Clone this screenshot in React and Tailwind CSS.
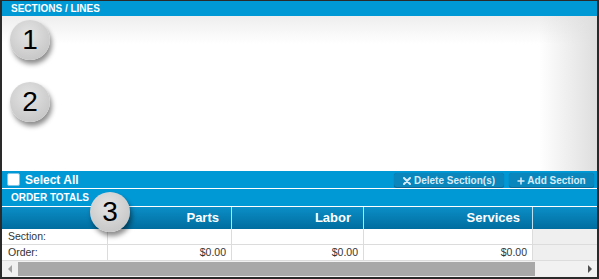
import React from 'react';

const COLS = [
  { key: 'label', w: 'w-[106px]', title: '' },
  { key: 'parts', w: 'w-[124px]', title: 'Parts' },
  { key: 'labor', w: 'w-[132px]', title: 'Labor' },
  { key: 'services', w: 'w-[169px]', title: 'Services' },
];

function Badge({ n, className }) {
  return (
    <div
      className={`absolute w-[40px] h-[40px] rounded-full flex items-center justify-center bg-[radial-gradient(circle_at_45%_35%,#e4e4e4,#c8c8c8_75%,#b8b8b8)] shadow-[2px_4px_5px_rgba(0,0,0,0.45)] text-[28px] leading-none text-black ${className}`}
    >
      {n}
    </div>
  );
}

function Row({ label, values }) {
  return (
    <div className="flex h-[16px] border-b border-[#dcdcdc] text-[10.5px] text-[#333]">
      <div className="w-[106px] border-r border-[#dcdcdc] bg-white pl-[6px] flex items-center">{label}</div>
      {values.map((v, i) => (
        <div
          key={i}
          className={`${COLS[i + 1].w} border-r border-[#dcdcdc] bg-white pr-[5px] flex items-center justify-end`}
        >
          {v}
        </div>
      ))}
      <div className="flex-1 bg-[#efefef]" />
    </div>
  );
}

export default function App() {
  return (
    <div className="relative w-[599px] h-[279px] overflow-hidden bg-white border-t border-l-2 border-r-2 border-b-2 border-[#2a2a2a] font-['Liberation_Sans',Arial,sans-serif] flex flex-col">
      {/* header */}
      <div className="h-[15px] bg-[#0099d6] text-white font-bold text-[10px] leading-[15px] pl-[9px]">
        SECTIONS / LINES
      </div>

      {/* sections area */}
      <div className="h-[155px] bg-[linear-gradient(to_left,#dedede,rgba(255,255,255,0)_58px),linear-gradient(to_bottom,#eeeeee,#ffffff_28px)]" />

      {/* select all bar */}
      <div className="h-[17px] bg-[#0099d6] flex items-end justify-between pr-[3px]">
        <label className="flex items-center h-[17px] pl-[5px] gap-[5px] text-white font-bold text-[12px]">
          <span className="w-[13px] h-[13px] bg-white rounded-[2px] border border-[#7fc6e8]" />
          Select All
        </label>
        <div className="flex gap-[5px] h-[15px]">
          <button className="w-[110px] h-[15px] rounded-[3px] bg-[#0a86bd] shadow-[inset_0_-1px_0_rgba(0,0,0,0.2),0_0_1px_rgba(0,0,0,0.3)] text-[#d6ecf7] font-bold text-[10px] flex items-center justify-center gap-[3px]">
            <svg width="8" height="8" viewBox="0 0 8 8" className="shrink-0">
              <path d="M1 1L7 7M7 1L1 7" stroke="#d6ecf7" strokeWidth="2" strokeLinecap="round" />
            </svg>
            Delete Section(s)
          </button>
          <button className="w-[85px] h-[15px] rounded-[3px] bg-[#0a86bd] shadow-[inset_0_-1px_0_rgba(0,0,0,0.2),0_0_1px_rgba(0,0,0,0.3)] text-[#d6ecf7] font-bold text-[10px] flex items-center justify-center gap-[2px]">
            <svg width="8" height="8" viewBox="0 0 8 8" className="shrink-0">
              <path d="M4 0.5V7.5M0.5 4H7.5" stroke="#d6ecf7" strokeWidth="1.5" />
            </svg>
            Add Section
          </button>
        </div>
      </div>
      <div className="h-[1px] bg-white" />

      {/* order totals */}
      <div className="h-[17px] bg-[#0099d6] text-white font-bold text-[10px] leading-[17px] pl-[9px]">
        ORDER TOTALS
      </div>
      <div className="h-[1px] bg-white" />

      {/* table header */}
      <div className="flex h-[22px] bg-[linear-gradient(to_bottom,#0b8ec7,#006d9f)] text-white font-bold text-[13px]">
        {COLS.map((c) => (
          <div key={c.key} className={`${c.w} border-r border-[#bfe0ef] flex items-center justify-end pr-[12px]`}>
            {c.title}
          </div>
        ))}
        <div className="flex-1" />
      </div>

      <Row label="Section:" values={['', '', '']} />
      <Row label="Order:" values={['$0.00', '$0.00', '$0.00']} />

      {/* scrollbar */}
      <div className="flex-1 bg-[#f1f1f1] flex items-center">
        <div className="w-[16px] flex items-center justify-center">
          <span className="w-0 h-0 border-y-[4px] border-y-transparent border-r-[4px] border-r-[#a3a3a3]" />
        </div>
        <div className="w-[517px] h-[14px] bg-[#a8a8a8]" />
        <div className="flex-1 flex items-center justify-end pr-[5px]">
          <span className="w-0 h-0 border-y-[4px] border-y-transparent border-l-[4px] border-l-[#505050]" />
        </div>
      </div>

      <Badge n="1" className="left-[8px] top-[19px]" />
      <Badge n="2" className="left-[8px] top-[81px]" />
      <Badge n="3" className="left-[88px] top-[191px]" />
    </div>
  );
}
